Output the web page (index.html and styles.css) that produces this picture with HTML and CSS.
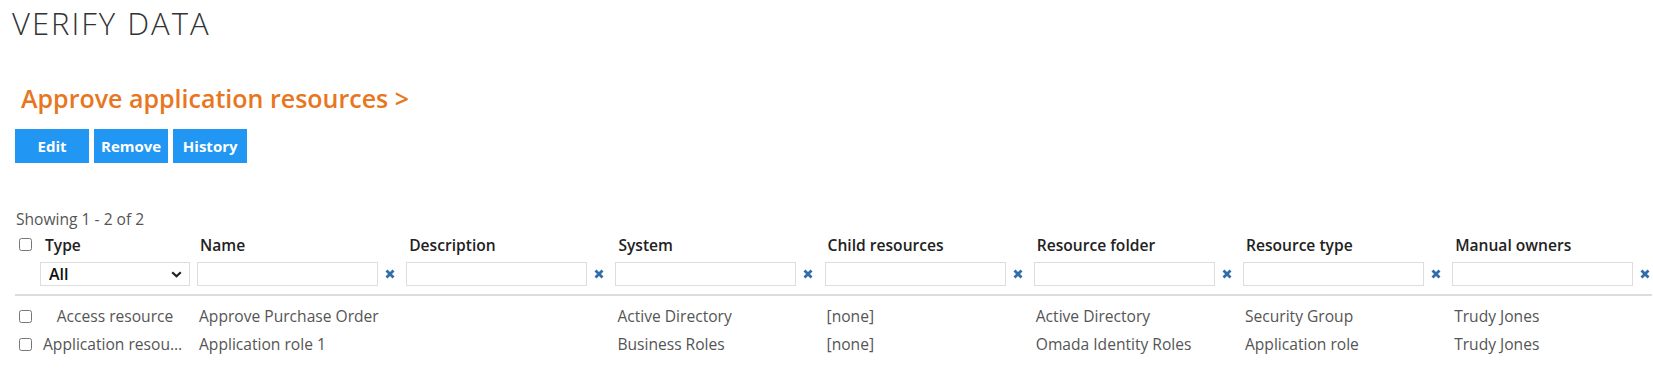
FILE: index.html
```html
<!DOCTYPE html>
<html lang="en">
<head>
    <meta charset="UTF-8">
    <title>Verify data</title>
    <link rel="stylesheet" href="styles.css">
</head>
<body>
    <h1 class="page-title">VERIFY DATA</h1>

    <h2 class="section-title">Approve application resources &gt;</h2>

    <div class="actions">
        <button class="btn btn-edit">Edit</button>
        <button class="btn">Remove</button>
        <button class="btn">History</button>
    </div>

    <div class="paging">Showing 1 - 2 of 2</div>

    <table class="grid">
        <colgroup>
            <col class="col-check">
            <col class="col-type">
            <col class="col-std">
            <col class="col-std">
            <col class="col-std">
            <col class="col-std">
            <col class="col-std">
            <col class="col-std">
            <col class="col-last">
        </colgroup>
        <thead>
            <tr class="labels">
                <th class="check"><input type="checkbox"></th>
                <th class="type">Type</th>
                <th>Name</th>
                <th>Description</th>
                <th>System</th>
                <th>Child resources</th>
                <th>Resource folder</th>
                <th>Resource type</th>
                <th>Manual owners</th>
            </tr>
            <tr class="filters">
                <td></td>
                <td class="type">
                    <div class="select-wrap">
                        <select><option>All</option></select>
                        <svg class="chevron" width="11" height="7" viewBox="0 0 11 7"><path d="M1.2 1.2 L5.5 5.3 L9.8 1.2" fill="none" stroke="#222" stroke-width="2.2"/></svg>
                    </div>
                </td>
                <td><div class="filter"><input type="text"><span class="clear"><svg width="10" height="10" viewBox="0 0 10 10"><path d="M1.5 1.5 L8.5 8.5 M8.5 1.5 L1.5 8.5" stroke="#2f6eaa" stroke-width="2.8"/></svg></span></div></td>
                <td><div class="filter"><input type="text"><span class="clear"><svg width="10" height="10" viewBox="0 0 10 10"><path d="M1.5 1.5 L8.5 8.5 M8.5 1.5 L1.5 8.5" stroke="#2f6eaa" stroke-width="2.8"/></svg></span></div></td>
                <td><div class="filter"><input type="text"><span class="clear"><svg width="10" height="10" viewBox="0 0 10 10"><path d="M1.5 1.5 L8.5 8.5 M8.5 1.5 L1.5 8.5" stroke="#2f6eaa" stroke-width="2.8"/></svg></span></div></td>
                <td><div class="filter"><input type="text"><span class="clear"><svg width="10" height="10" viewBox="0 0 10 10"><path d="M1.5 1.5 L8.5 8.5 M8.5 1.5 L1.5 8.5" stroke="#2f6eaa" stroke-width="2.8"/></svg></span></div></td>
                <td><div class="filter"><input type="text"><span class="clear"><svg width="10" height="10" viewBox="0 0 10 10"><path d="M1.5 1.5 L8.5 8.5 M8.5 1.5 L1.5 8.5" stroke="#2f6eaa" stroke-width="2.8"/></svg></span></div></td>
                <td><div class="filter"><input type="text"><span class="clear"><svg width="10" height="10" viewBox="0 0 10 10"><path d="M1.5 1.5 L8.5 8.5 M8.5 1.5 L1.5 8.5" stroke="#2f6eaa" stroke-width="2.8"/></svg></span></div></td>
                <td><div class="filter"><input type="text"><span class="clear"><svg width="10" height="10" viewBox="0 0 10 10"><path d="M1.5 1.5 L8.5 8.5 M8.5 1.5 L1.5 8.5" stroke="#2f6eaa" stroke-width="2.8"/></svg></span></div></td>
            </tr>
        </thead>
        <tbody>
            <tr>
                <td class="check"><input type="checkbox"></td>
                <td class="type">Access resource</td>
                <td>Approve Purchase Order</td>
                <td></td>
                <td>Active Directory</td>
                <td>[none]</td>
                <td>Active Directory</td>
                <td>Security Group</td>
                <td>Trudy Jones</td>
            </tr>
            <tr>
                <td class="check"><input type="checkbox"></td>
                <td class="type">Application resource</td>
                <td>Application role 1</td>
                <td></td>
                <td>Business Roles</td>
                <td>[none]</td>
                <td>Omada Identity Roles</td>
                <td>Application role</td>
                <td>Trudy Jones</td>
            </tr>
        </tbody>
    </table>
</body>
</html>
```

FILE: styles.css
```css
body {
    margin: 0;
    padding: 0 0 0 12px;
    font-family: "Open Sans", Arial, sans-serif;
    color: #555;
    background: #fff;
    overflow: hidden;
}
.page-title {
    margin: 5px 0 0 0;
    font-size: 31px;
    line-height: 37px;
    font-weight: 300;
    color: #333;
    letter-spacing: 2px;
}
.section-title {
    margin: 41px 0 0 9px;
    font-size: 25px;
    line-height: 30px;
    font-weight: 600;
    color: #e8761e;
}
.actions {
    display: flex;
    gap: 5px;
    margin: 16px 0 0 3px;
}
.btn {
    height: 34px;
    min-width: 74px;
    padding: 0 7px;
    border: none;
    background-color: #2196f3;
    color: #fff;
    font-family: "Open Sans", Arial, sans-serif;
    font-size: 15px;
    font-weight: 700;
    cursor: pointer;
}
.paging {
    margin: 46px 0 0 4px;
    font-size: 15.6px;
    line-height: 20px;
}
.grid {
    margin: 6px 0 0 3px;
    border-collapse: collapse;
    table-layout: fixed;
    width: 1637px;
    font-size: 15.6px;
}
.col-check { width: 22px; }
.col-type { width: 156px; }
.col-std { width: 209.2px; }
.col-last { width: 204px; }
.grid th {
    padding: 0 0 0 7px;
    height: 24px;
    line-height: 20px;
    vertical-align: top;
    text-align: left;
    font-weight: 600;
    color: #222;
    white-space: nowrap;
}
.grid th.type {
    padding-left: 8px;
}
.grid .check {
    padding: 0;
}
.grid .check input {
    margin: 3px 3px 3px 4px;
    display: block;
}
.filters td {
    padding: 3px 0 8px 4px;
    border-bottom: 2px solid #dcdcdc;
}
.filters td.type {
    padding-left: 3px;
}
.select-wrap {
    position: relative;
    width: 150px;
}
.select-wrap select {
    appearance: none;
    display: block;
    width: 150px;
    height: 24px;
    padding: 0 0 0 8px;
    border: 1px solid #ddd;
    border-radius: 0;
    background: #fff;
    font-family: "Open Sans", Arial, sans-serif;
    font-size: 16px;
    font-weight: 600;
    color: #111;
}
.chevron {
    position: absolute;
    right: 8px;
    top: 9px;
    pointer-events: none;
}
.filter {
    display: flex;
    align-items: center;
}
.filter input {
    width: 181px;
    height: 24px;
    box-sizing: border-box;
    border: 1px solid #ddd;
    margin: 0;
    padding: 0 4px;
}
.clear {
    display: flex;
    margin-left: 7px;
}
.grid tbody td {
    height: 28px;
    padding: 0 0 0 6px;
    line-height: 28px;
    white-space: nowrap;
    overflow: hidden;
    text-overflow: ellipsis;
}
.grid tbody td.type {
    text-align: center;
    padding: 0 6px;
}
.grid tbody td.check {
    padding: 0;
}
.grid tbody tr:first-child td {
    padding-top: 6px;
}
```
